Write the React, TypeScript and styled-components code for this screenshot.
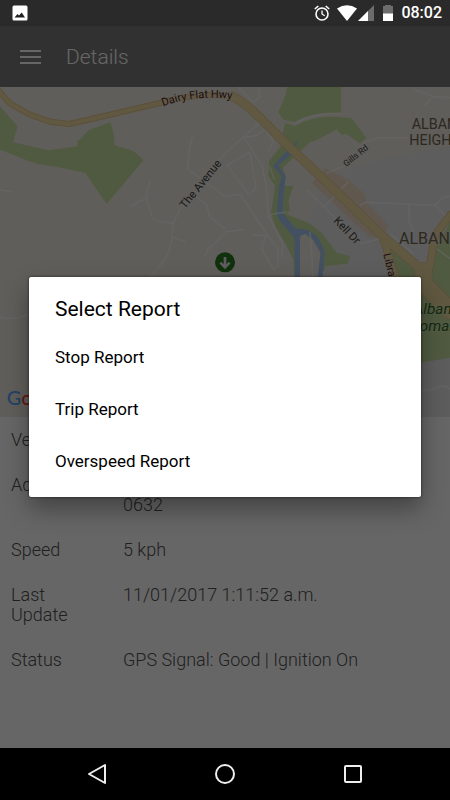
import React from "react";
import styled, { createGlobalStyle } from "styled-components";

const GlobalStyle = createGlobalStyle`
  *, *::before, *::after { box-sizing: border-box; }
  body {
    margin: 0;
    background: #000;
    font-family: Roboto, "Liberation Sans", sans-serif;
  }
  button { font: inherit; border: 0; padding: 0; background: none; cursor: pointer; }
`;

const Screen = styled.div`
  display: flex;
  flex-direction: column;
  min-height: 100vh;
`;

const StatusBar = styled.header`
  display: flex;
  align-items: center;
  justify-content: space-between;
  height: 26px;
  padding: 0 8px 0 12px;
  background: #2a2a2a;
  color: #fff;
`;

const StatusGroup = styled.div`
  display: flex;
  align-items: center;
`;

const Clock = styled.time`
  margin-left: 8px;
  font-size: 16px;
  line-height: 28px;
  font-weight: 500;
`;

const Glyph = styled.svg<{ $gap?: number }>`
  display: block;
  flex: none;
  margin-left: ${(p) => p.$gap ?? 0}px;
`;

const Content = styled.div`
  position: relative;
  display: flex;
  flex: 1;
  flex-direction: column;
  background: #fff;
`;

const AppBar = styled.div`
  display: flex;
  align-items: center;
  gap: 25px;
  height: 61px;
  padding: 0 20px;
  background: #7a7a7a;
  color: #fff;
`;

const MenuButton = styled.button`
  display: flex;
  color: inherit;
`;

const PageTitle = styled.h1`
  margin: 0;
  font-size: 21px;
  line-height: 28px;
  font-weight: 300;
`;

const MapView = styled.svg`
  display: block;
  width: 100%;
  aspect-ratio: 15 / 11;
  background: #f0ebe1;
  font-family: Roboto, sans-serif;
`;

const Details = styled.dl`
  display: grid;
  grid-template-columns: 80px 1fr;
  column-gap: 32px;
  row-gap: 25px;
  margin: 0;
  padding: 13px 11px;
  color: #505050;
  font-size: 18px;
  line-height: 20px;
  font-weight: 300;
`;

const Label = styled.dt`
  margin: 0;
`;

const Value = styled.dd`
  margin: 0;
  white-space: pre-line;
`;

const Scrim = styled.div`
  position: absolute;
  inset: 0;
  display: flex;
  align-items: center;
  justify-content: center;
  padding: 0 29px;
  background: rgba(0, 0, 0, 0.6);
`;

const Dialog = styled.section`
  flex: 1;
  padding: 19px 0 10px;
  border-radius: 2px;
  background: #fff;
  color: #000;
  box-shadow: 0 12px 24px rgba(0, 0, 0, 0.35), 0 0 3px rgba(0, 0, 0, 0.6);
`;

const DialogTitle = styled.h2`
  margin: 0 0 9px;
  padding: 0 26px;
  font-size: 21px;
  line-height: 26px;
  font-weight: 400;
`;

const Options = styled.ul`
  margin: 0;
  padding: 0;
  list-style: none;
`;

const Option = styled.button`
  display: block;
  width: 100%;
  height: 52px;
  && { padding: 0 26px; font-size: 17px; }
  color: #000;
  text-align: left;
`;

const NavBar = styled.nav`
  display: flex;
  align-items: center;
  justify-content: space-around;
  height: 52px;
  padding: 0 34px;
  background: #000;
`;

const NavButton = styled.button`
  display: flex;
  color: #eee;
`;

const rows = [
  { label: "Vehicle", value: "" },
  { label: "Address", value: "Albany, Auckland\n0632" },
  { label: "Speed", value: "5 kph" },
  { label: "Last Update", value: "11/01/2017 1:11:52 a.m." },
  { label: "Status", value: "GPS Signal: Good | Ignition On" },
];

const reports = ["Stop Report", "Trip Report", "Overspeed Report"];

function AreaMap() {
  return (
    <MapView viewBox="0 0 1350 990" preserveAspectRatio="xMidYMid slice" role="img" aria-label="Map of Albany">
      <path d="M995 262 1155 212 1350 178V990H900V450Z" fill="#e9e9ea" />
      <g fill="#c8e0a0">
        <path d="M0 58 53 118 39 166 145 190 233 178V158L239 159 265 130 332 105 342 145 344 175 400 192 431 219 320 351 256 258 170 239 110 231 0 188Z" />
        <path d="M862 0H1023V78Q930 75 887 106L850 98 835 76 858 20Z" />
        <path d="M856 109 885 117Q950 78 1055 94L1099 152 1080 170 1040 140 1025 145 1010 127 945 162 930 165 848 242 857 268 853 298 880 296 865 342 870 367 860 382 925 407 965 437 1010 497 1050 507 1044 530 975 537 955 600H885L880 517 860 477 825 417 813 377 825 297 805 267 807 222 855 162 849 137Z" />
      </g>
      <path
        d="M900 447 915 440 940 459 962 497 950 600H900Z"
        fill="#f0ebe1"
      />
      <path
        d="M896 158 875 202 835 235 857 268 850 327 848 377 888 426Q925 420 955 452L974 492 965 600H950L962 497 940 459 915 440 900 447V600H885L883 452 840 402 830 382 837 297 845 267 819 237 860 192Z"
        fill="#a8c8f4"
      />
      <path d="M975 242 1050 282 1095 322 1100 347 1167 417 1145 457 1105 447 935 287Z" fill="#f0dac6" />
      <path d="M1165 470 1245 548 1255 600H1180Z M1350 405 1305 490 1290 600 1260 600V827L1350 812Z" fill="#c8e0a0" />
      <g fill="none" stroke="#fff" strokeWidth="5" strokeLinejoin="round" strokeLinecap="round" opacity="0.6">
        <path d="M577 150 569 180 563 240 567 250 610 280 675 328M675 202 655 220 590 320 540 365 520 408 516 455 508 490 493 520 455 567 400 605" />
        <path d="M450 283 440 320V340L458 395 480 403 520 409M440 338 420 340 396 358M517 450 552 463 556 470M585 325 620 355 630 390 675 425M675 440 625 485 615 505" />
        <path d="M0 309 34 314M0 690Q40 702 90 680" />
        <path d="M713 0 760 45 780 30 775 0M675 200 775 110M732 150 785 235 798 290 805 385 848 470 845 510M735 152 770 145 795 128 820 165 805 192M682 235 750 195 768 305 745 322 682 235M675 328 720 322 790 425 835 490V535L820 548 785 485 798 445M675 435 728 428M757 443 805 447" />
        <path d="M887 106Q950 75 1025 80M980 257 1040 235M1090 168 1130 153 1225 153M1245 8 1300 28 1350 32M1300 28 1275 55" />
        <path d="M922 310 1085 470 1140 455M975 357 1045 285M1080 355 1100 346 1305 355 1330 330 1350 328M1228 355V405L1240 435M1305 355 1350 400M813 382 860 375M810 240 822 275" />
        <path d="M930 437Q938 500 937 590M1175 445 1240 500M1310 485 1350 515M1240 585Q1330 630 1350 680M1264 911 1300 907Q1330 888 1350 906" />
      </g>
      <g fill="none" strokeLinejoin="round" strokeLinecap="round">
        <g stroke="#e2c588">
          <path d="M1350 385 1305 445 1285 560M1150 455 1190 580" strokeWidth="24" />
          <path d="M-5 10 30 50 90 83 150 104 208 111 300 90 480 48Q600 15 695 28" strokeWidth="18" />
          <path d="M695 27Q735 45 800 112L870 182 995 300 1150 450 1270 552" strokeWidth="28" />
          <path d="M1270 552V590L1350 670" strokeWidth="54" />
        </g>
        <g stroke="#f3dba4">
          <path d="M1350 385 1305 445 1285 560M1150 455 1190 580" strokeWidth="19" />
          <path d="M-5 10 30 50 90 83 150 104 208 111 300 90 480 48Q600 15 695 28" strokeWidth="13" />
          <path d="M695 27Q735 45 800 112L870 182 995 300 1150 450 1270 552" strokeWidth="24" />
          <path d="M1270 552V590L1350 670" strokeWidth="50" />
        </g>
      </g>
      <path id="highway-label" d="M489 58Q590 20 705 38" fill="none" />
      <g stroke="#f0ebe1" strokeWidth="3" strokeLinejoin="round" paintOrder="stroke">
        <text fontSize="33" fill="#4e1a0e">
          <textPath href="#highway-label">Dairy Flat Hwy</textPath>
        </text>
        <text fontSize="34" fill="#444" transform="translate(555 367) rotate(-51)">The Avenue</text>
        <text fontSize="26" fill="#444" transform="translate(1039 240) rotate(-39)">Gills Rd</text>
        <text fontSize="34" fill="#444" transform="translate(999 403) rotate(46)">Kell Dr</text>
        <text fontSize="32" fill="#4e1a0e" transform="translate(1150 502) rotate(76)">Library Ln</text>
        <text x="1235" y="125" fontSize="43" fill="#6f6450">ALBANY</text>
        <text x="1228" y="174" fontSize="43" fill="#6f6450">HEIGHTS</text>
        <text x="1197" y="471" fontSize="48" fill="#6f6450">ALBANY</text>
        <g fontSize="46" fontStyle="italic" fill="#33691e" stroke="#dcebc5">
          <text x="1241" y="682">Albany</text>
          <text x="1230" y="732">Domain</text>
        </g>
      </g>
      <circle cx="675" cy="526" r="30" fill="#2a7a20" />
      <path d="M675 510V540M661 527 675 541 689 527" fill="none" stroke="#e8e8e8" strokeWidth="8" />
      <text x="20" y="954" fontSize="60" fontWeight="500" fontFamily="Lato, sans-serif">
        <tspan fill="#5aa2ff">G</tspan>
        <tspan fill="#ff4030">o</tspan>
      </text>
    </MapView>
  );
}

export default function App() {
  return (
    <Screen>
      <GlobalStyle />
      <StatusBar>
        <Glyph width="16" height="16" viewBox="0 0 16 16" aria-hidden="true">
          <rect x="0.500" y="0.500" width="15" height="15" rx="1.500" fill="#fff" />
          <path d="M2.500 12.500 5.500 9 7 10.500 9.700 7.500 13 12.500Z" fill="#222" />
        </Glyph>
        <StatusGroup>
          <Glyph width="16" height="16" viewBox="0 0 16 16" fill="none" stroke="#fff" aria-hidden="true">
            <circle cx="8" cy="9" r="6" strokeWidth="1.600" />
            <path d="M8 5.500V9L10.700 10.700" strokeWidth="1.300" />
            <path d="M0.800 4 4.300 1M11.700 1 15.200 4" strokeWidth="1.600" />
          </Glyph>
          <Glyph $gap={7} width="20" height="16" viewBox="0 0 20 16" aria-hidden="true">
            <path d="M0 3.500Q10-3 20 3.500L10 16Z" fill="#fff" />
          </Glyph>
          <Glyph $gap={1} width="16" height="16" viewBox="0 0 16 16" aria-hidden="true">
            <path d="M16 0V16H0Z" fill="#6c6c6c" />
            <path d="M10 6V16H0Z" fill="#fff" />
          </Glyph>
          <Glyph $gap={9} width="10" height="16" viewBox="0 0 10 16" aria-hidden="true">
            <path d="M2 0H8V1H10V9H0V1H2Z" fill="#6c6c6c" />
            <path d="M0 8.500H10V16H0Z" fill="#fff" />
          </Glyph>
          <Clock>08:02</Clock>
        </StatusGroup>
      </StatusBar>

      <Content>
        <AppBar>
          <MenuButton type="button" aria-label="Open menu">
            <Glyph width="21" height="16" viewBox="0 0 21 16" aria-hidden="true">
              <path d="M0 2H21M0 8H21M0 14H21" stroke="currentColor" strokeWidth="2" />
            </Glyph>
          </MenuButton>
          <PageTitle>Details</PageTitle>
        </AppBar>
        <AreaMap />
        <Details>
          {rows.map((row) => (
            <React.Fragment key={row.label}>
              <Label>{row.label}</Label>
              <Value>{row.value}</Value>
            </React.Fragment>
          ))}
        </Details>
        <Scrim>
          <Dialog role="dialog" aria-modal="true" aria-labelledby="report-title">
            <DialogTitle id="report-title">Select Report</DialogTitle>
            <Options>
              {reports.map((report) => (
                <li key={report}>
                  <Option type="button">{report}</Option>
                </li>
              ))}
            </Options>
          </Dialog>
        </Scrim>
      </Content>

      <NavBar>
        <NavButton type="button" aria-label="Back">
          <Glyph width="20" height="22" viewBox="0 0 20 22" aria-hidden="true">
            <path d="M18 2V20L2 11Z" fill="none" stroke="currentColor" strokeWidth="2" strokeLinejoin="round" />
          </Glyph>
        </NavButton>
        <NavButton type="button" aria-label="Home">
          <Glyph width="22" height="22" viewBox="0 0 22 22" aria-hidden="true">
            <circle cx="11" cy="11" r="9" fill="none" stroke="currentColor" strokeWidth="2" />
          </Glyph>
        </NavButton>
        <NavButton type="button" aria-label="Recent apps">
          <Glyph width="20" height="20" viewBox="0 0 20 20" aria-hidden="true">
            <rect x="2" y="2" width="16" height="16" rx="1" fill="none" stroke="currentColor" strokeWidth="2" />
          </Glyph>
        </NavButton>
      </NavBar>
    </Screen>
  );
}
